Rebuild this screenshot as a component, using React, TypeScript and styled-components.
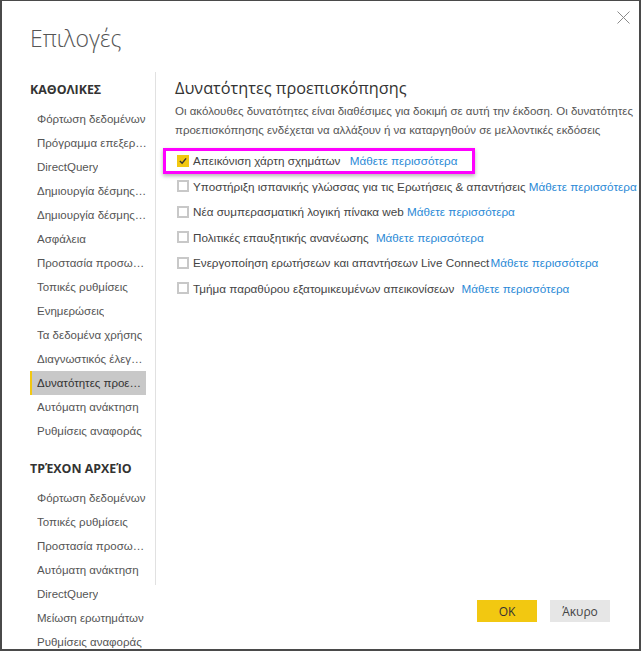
import React from 'react';
import styled, { createGlobalStyle } from 'styled-components';

const GlobalStyle = createGlobalStyle`
  html, body {
    margin: 0;
    padding: 0;
    background: #ffffff;
  }

  * {
    box-sizing: border-box;
  }
`;

const FONT = '"Liberation Sans", Arial, "DejaVu Sans", sans-serif';
const DISPLAY_FONT = '"Open Sans", "Noto Sans", "DejaVu Sans", sans-serif';

type NavEntry = { label: string; selected?: boolean };

type Feature = { label: string; link: string; checked?: boolean; highlighted?: boolean; gap?: number };

const generalItems: NavEntry[] = [
  { label: 'Φόρτωση δεδομένων' },
  { label: 'Πρόγραμμα επεξεργασίας Power Query' },
  { label: 'DirectQuery' },
  { label: 'Δημιουργία δέσμης ενεργειών R' },
  { label: 'Δημιουργία δέσμης ενεργειών Python' },
  { label: 'Ασφάλεια' },
  { label: 'Προστασία προσωπικών δεδομένων' },
  { label: 'Τοπικές ρυθμίσεις' },
  { label: 'Ενημερώσεις' },
  { label: 'Τα δεδομένα χρήσης' },
  { label: 'Διαγνωστικός έλεγχος' },
  { label: 'Δυνατότητες προεπισκόπησης', selected: true },
  { label: 'Αυτόματη ανάκτηση' },
  { label: 'Ρυθμίσεις αναφοράς' }
];

const fileItems: NavEntry[] = [
  { label: 'Φόρτωση δεδομένων' },
  { label: 'Τοπικές ρυθμίσεις' },
  { label: 'Προστασία προσωπικών δεδομένων' },
  { label: 'Αυτόματη ανάκτηση' },
  { label: 'DirectQuery' },
  { label: 'Μείωση ερωτημάτων' },
  { label: 'Ρυθμίσεις αναφοράς' }
];

const features: Feature[] = [
  { label: 'Απεικόνιση χάρτη σχημάτων', link: 'Μάθετε περισσότερα', checked: true, highlighted: true, gap: 6 },
  { label: 'Υποστήριξη ισπανικής γλώσσας για τις Ερωτήσεις & απαντήσεις', link: 'Μάθετε περισσότερα', gap: 0 },
  { label: 'Νέα συμπερασματική λογική πίνακα web', link: 'Μάθετε περισσότερα', gap: 0 },
  { label: 'Πολιτικές επαυξητικής ανανέωσης', link: 'Μάθετε περισσότερα', gap: 4 },
  { label: 'Ενεργοποίηση ερωτήσεων και απαντήσεων Live Connect', link: 'Μάθετε περισσότερα', gap: -2 },
  { label: 'Τμήμα παραθύρου εξατομικευμένων απεικονίσεων', link: 'Μάθετε περισσότερα', gap: 4 }
];

const Dialog = styled.div`
  width: 641px;
  height: 651px;
  border: solid #4a4a4a;
  border-width: 1px 2px 2px 2px;
  background: #ffffff;
  font-family: ${FONT};
  overflow: hidden;
  display: flex;
  flex-direction: column;
`;

const Header = styled.header`
  height: 71px;
  flex: none;
  display: flex;
  justify-content: space-between;
  align-items: flex-start;
  padding: 0 9px 0 28px;
`;

const Title = styled.h1`
  margin: 0;
  padding-top: 19px;
  font-family: ${DISPLAY_FONT};
  font-size: 23px;
  line-height: 36px;
  font-weight: 300;
  color: #555555;
`;

const CloseButton = styled.button`
  margin-top: 9px;
  width: 14px;
  height: 14px;
  padding: 0;
  border: 0;
  background: transparent;
  display: flex;
  align-items: center;
  justify-content: center;
  cursor: pointer;
`;

const Body = styled.div`
  flex: 1;
  min-height: 0;
  display: grid;
  grid-template-columns: 153px minmax(0, 1fr);
  grid-template-rows: 513px 1fr;
`;

const Nav = styled.nav`
  grid-row: 1 / 3;
  padding: 8px 0 0 28px;
`;

const NavHeading = styled.div<{ $first?: boolean }>`
  margin: ${({ $first }) => ($first ? '0' : '16px')} 0 7px 0;
  font-family: ${DISPLAY_FONT};
  font-size: 12.4px;
  line-height: 20px;
  font-weight: 700;
  color: #333333;
  white-space: nowrap;
`;

const NavItem = styled.div<{ $selected?: boolean }>`
  width: ${({ $selected }) => ($selected ? '116px' : '118px')};
  height: 24px;
  display: flex;
  align-items: center;
  padding-left: ${({ $selected }) => ($selected ? '5px' : '7px')};
  border-left: ${({ $selected }) => ($selected ? '2px solid #f2c811' : '0')};
  background: ${({ $selected }) => ($selected ? '#c8c8c8' : 'transparent')};
  color: ${({ $selected }) => ($selected ? '#333333' : '#555555')};
  font-size: 11.5px;
  cursor: pointer;

  span {
    white-space: nowrap;
    overflow: hidden;
    text-overflow: ellipsis;
  }
`;

const Content = styled.section`
  border-left: 1px solid #e1e1e1;
  padding: 4px 0 0 19px;
`;

const Heading = styled.h2`
  margin: 0;
  font-family: ${DISPLAY_FONT};
  font-size: 16.3px;
  line-height: 24px;
  font-weight: 400;
  color: #333333;
  white-space: nowrap;
`;

const Description = styled.p`
  margin: 2px 0 8px 0;
  font-size: 11.5px;
  line-height: 19px;
  color: #555555;
  white-space: nowrap;
`;

const FeatureRow = styled.label<{ $highlighted?: boolean }>`
  height: 25.5px;
  display: flex;
  align-items: center;
  gap: 4px;
  padding-left: 2px;
  font-size: 11.7px;
  color: #444444;
  white-space: nowrap;
  cursor: pointer;

  ${({ $highlighted }) => $highlighted && `
    width: fit-content;
    margin-left: -12px;
    padding: 0 14px 0 11px;
    border: 3px solid #ff00ff;
    box-shadow: 0 2px 4px rgba(0, 0, 0, 0.3);
  `}
`;

const Box = styled.span<{ $checked?: boolean }>`
  flex: none;
  width: 12px;
  height: 12px;
  border: 2px solid ${({ $checked }) => ($checked ? '#f2c811' : '#c8c8c8')};
  background: ${({ $checked }) => ($checked ? '#f2c811' : '#ffffff')};
  display: flex;
  align-items: center;
  justify-content: center;
`;

const Link = styled.a<{ $gap: number }>`
  margin-left: ${({ $gap }) => $gap}px;
  color: #2b8ad6;
  text-decoration: none;
  cursor: pointer;
`;

const Footer = styled.div`
  grid-column: 2;
  display: flex;
  justify-content: flex-end;
  align-items: flex-start;
  gap: 13px;
  padding: 15px 29px 0 0;
`;

const Button = styled.button<{ $primary?: boolean }>`
  width: 60px;
  height: 22px;
  border: 0;
  padding: 0;
  font-family: ${DISPLAY_FONT};
  font-size: 12px;
  color: ${({ $primary }) => ($primary ? '#333333' : '#444444')};
  background: ${({ $primary }) => ($primary ? '#f2c811' : '#e6e6e6')};
  cursor: pointer;
`;

function CloseIcon () {
  return (
    <svg width='13' height='13' viewBox='0 0 13 13'>
      <path d='M0.5 0.5 L12.5 12.5 M12.5 0.5 L0.5 12.5' stroke='#8a8a8a' strokeWidth='1' fill='none' />
    </svg>
  );
}

function CheckMark () {
  return (
    <svg width='9' height='8' viewBox='0 0 9 8'>
      <path d='M1 4 L3.5 6.5 L8 1' stroke='#333333' strokeWidth='1.6' fill='none' />
    </svg>
  );
}

export default function App (): React.ReactElement {
  return (
    <>
      <GlobalStyle />
      <Dialog>
        <Header>
          <Title>Επιλογές</Title>
          <CloseButton aria-label='Κλείσιμο'>
            <CloseIcon />
          </CloseButton>
        </Header>
        <Body>
          <Nav>
            <NavHeading $first>ΚΑΘΟΛΙΚΕΣ</NavHeading>
            {generalItems.map((item) => (
              <NavItem key={item.label} $selected={item.selected}>
                <span>{item.label}</span>
              </NavItem>
            ))}
            <NavHeading>ΤΡΈΧΟΝ ΑΡΧΕΊΟ</NavHeading>
            {fileItems.map((item) => (
              <NavItem key={item.label}>
                <span>{item.label}</span>
              </NavItem>
            ))}
          </Nav>
          <Content>
            <Heading>Δυνατότητες προεπισκόπησης</Heading>
            <Description>
              Οι ακόλουθες δυνατότητες είναι διαθέσιμες για δοκιμή σε αυτή την έκδοση. Οι δυνατότητες
              <br />
              προεπισκόπησης ενδέχεται να αλλάξουν ή να καταργηθούν σε μελλοντικές εκδόσεις
            </Description>
            {features.map((f) => (
              <FeatureRow key={f.label} $highlighted={f.highlighted}>
                <Box $checked={f.checked}>{f.checked && <CheckMark />}</Box>
                <span>
                  {f.label} <Link $gap={f.gap ?? 0}>{f.link}</Link>
                </span>
              </FeatureRow>
            ))}
          </Content>
          <Footer>
            <Button $primary>OK</Button>
            <Button>Άκυρο</Button>
          </Footer>
        </Body>
      </Dialog>
    </>
  );
}
